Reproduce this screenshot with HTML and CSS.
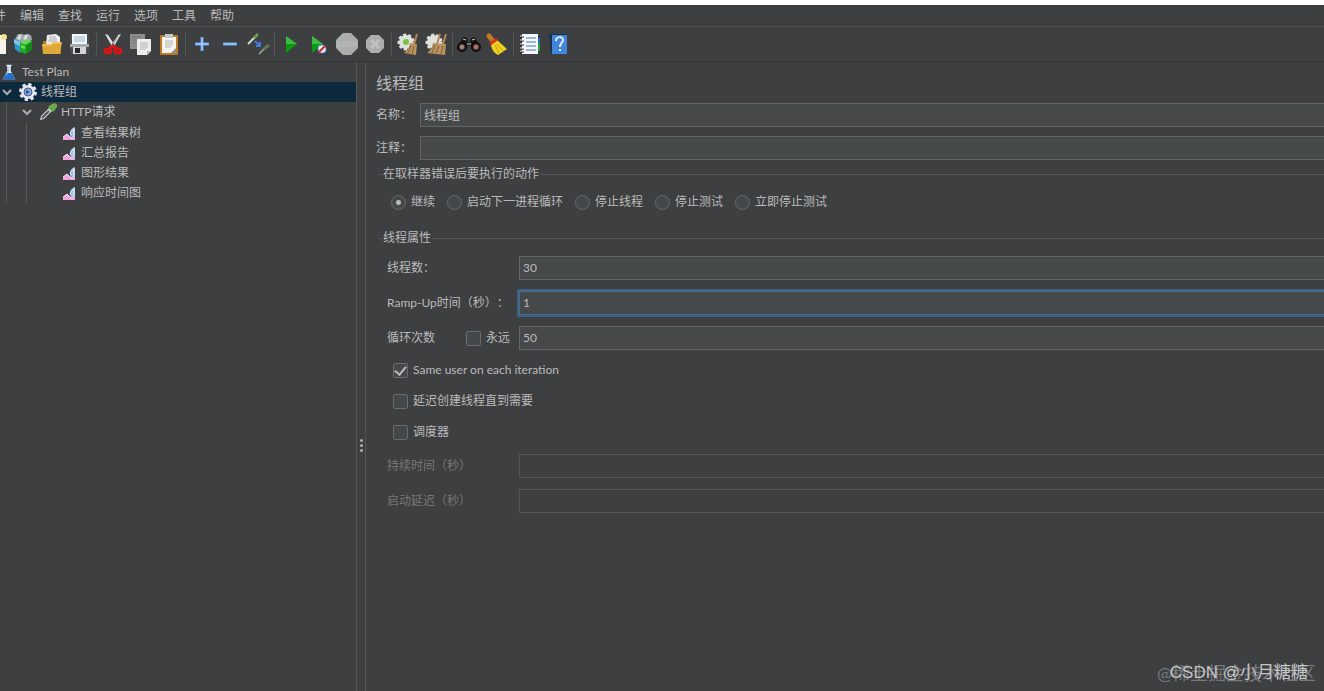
FILE: index.html
```html
<!DOCTYPE html>
<html lang="zh-CN">
<head>
    <meta charset="UTF-8">
    <meta name="viewport" content="width=device-width, initial-scale=1.0">
    <title>线程组</title>
    <link rel="stylesheet" href="styles.css">
</head>
<body>
    <nav class="menubar">
        <button>文件</button>
        <button>编辑</button>
        <button>查找</button>
        <button>运行</button>
        <button>选项</button>
        <button>工具</button>
        <button>帮助</button>
    </nav>

    <div class="toolbar">
        <button aria-label="新建">
            <svg viewBox="0 0 24 24"><path d="M4 3h15l3 3v16H4z" fill="#f4f4ec"/><circle cx="20" cy="5" r="3" fill="#f5e58a"/></svg>
        </button>
        <button aria-label="模板">
            <svg viewBox="0 0 24 24">
                <path d="M3 7l3-5 13 1 1 5-9 4z" fill="#9ba8aa"/><path d="M7 3l3-1-2 6-3-1zM13 3l4-1-3 6-3-1z" fill="#d5dddd"/>
                <path d="M2 7l6 3v11l-5-4z" fill="#2f9bd0"/><path d="M2 7l6 3v4l-6-3z" fill="#7cc8ea"/>
                <path d="M8 11l6 2v9l-6-2z" fill="#22a824"/><path d="M14 13l6-4v9l-6 4z" fill="#138a18"/><path d="M8 11l6-3 6 1-6 4z" fill="#5ade4a"/><path d="M9 13l4 1v3l-4-1z" fill="#62e05a"/>
            </svg>
        </button>
        <button aria-label="打开">
            <svg viewBox="0 0 24 24">
                <path d="M3 9h6l2 2h10v11H3z" fill="#b07a14"/><path d="M7 3l9-1 4 3v8H6z" fill="#f1f1f1"/><path d="M9 5h7M9 7h8M8 9h9" stroke="#aaa"/>
                <path d="M2 12h9l2-2h9l-2 12H3z" fill="#e0a838"/><path d="M3 13h8l2-2h8" stroke="#f8d682" fill="none"/>
            </svg>
        </button>
        <button aria-label="保存">
            <svg viewBox="0 0 24 24">
                <path d="M2 2h19v20H4l-2-2z" fill="#4b4f54"/><path d="M4 2h15v10H4z" fill="#f3f6f8"/><path d="M6 5h11M6 7h11M6 9h11" stroke="#9fb8cc"/>
                <path d="M2 12h19v3H2z" fill="#a7abad"/><path d="M5 15h13v7H5z" fill="#d4d6d8"/><path d="M7 16h5v5H7z" fill="#25282a"/>
            </svg>
        </button>
        <span class="sep"></span>
        <button aria-label="剪切">
            <svg viewBox="0 0 24 24">
                <path d="M4 2l3 1 8 12-3 1zM20 2l-3 1-8 12 3 1z" fill="#dfe3e4"/><path d="M17 4l-6 10" stroke="#8e9496"/>
                <ellipse cx="7" cy="19" rx="3" ry="2" stroke="#d81616" stroke-width="3" fill="none"/><ellipse cx="17" cy="19" rx="3" ry="2" stroke="#d81616" stroke-width="3" fill="none"/>
                <path d="M8 17l4-3 4 3" stroke="#d81616" stroke-width="3" fill="none"/>
            </svg>
        </button>
        <button aria-label="复制">
            <svg viewBox="0 0 24 24">
                <path d="M1 2h15v15H1z" fill="#8c8f90"/><path d="M3 5h10M3 8h5M3 11h5" stroke="#727576"/>
                <path d="M8 7h14v12l-4 4H8z" fill="#ececec"/><path d="M11 11h8M11 13h8M11 15h8M11 17h6" stroke="#b4b4b4"/><path d="M18 23v-4h4z" fill="#bdbdbd"/>
            </svg>
        </button>
        <button aria-label="粘贴">
            <svg viewBox="0 0 24 24">
                <rect x="3" y="3" width="18" height="20" rx="1" fill="#bd7a24"/><path d="M5 5h14v16H5z" fill="#f3f3f0"/><path d="M8 2h8v4H8z" fill="#c6c8c8"/>
                <path d="M8 9h8M8 11h8M8 13h8M8 15h6" stroke="#b4b4b4"/><path d="M14 21l5-5v5z" fill="#8d8d8d"/>
            </svg>
        </button>
        <span class="sep"></span>
        <button aria-label="展开">
            <svg viewBox="0 0 24 24"><path d="M12 5v14M5 12h14" stroke="#6ba6ef" stroke-width="3"/><path d="M12 6v12M6 12h12" stroke="#b5d6ff"/></svg>
        </button>
        <button aria-label="折叠">
            <svg viewBox="0 0 24 24"><path d="M5 12h14" stroke="#6ba6ef" stroke-width="3"/><path d="M6 12h12" stroke="#b5d6ff"/></svg>
        </button>
        <button aria-label="切换">
            <svg viewBox="0 0 24 24">
                <path d="M2 12l7-7" stroke="#d5dccd" stroke-width="2"/><path d="M8 6l4-4" stroke="#6a9a4b" stroke-width="3"/>
                <path d="M13 22l6-6" stroke="#8d907f" stroke-width="2"/><path d="M18 17l5-4" stroke="#66764f" stroke-width="3"/>
                <path d="M9 9l5 5M14 10v4h-4" stroke="#3f7de0" stroke-width="2" fill="none"/>
            </svg>
        </button>
        <span class="sep"></span>
        <button aria-label="启动">
            <svg viewBox="0 0 24 24"><path d="M7 4l11 8-11 9z" fill="#0a9a14"/><path d="M7 4l11 8H7z" fill="#3fb944"/></svg>
        </button>
        <button aria-label="不停顿开始">
            <svg viewBox="0 0 24 24">
                <path d="M5 4l11 8-11 9z" fill="#0a9a14"/><path d="M5 4l11 8H5z" fill="#3fb944"/>
                <circle cx="15" cy="17" r="4" fill="#e8eefc" stroke="#86a4dc"/><path d="M12 20l6-6" stroke="#d02222" stroke-width="2"/>
            </svg>
        </button>
        <button aria-label="停止">
            <svg viewBox="0 0 24 24">
                <path d="M8 1h8l7 7v8l-7 7H8l-7-7V8z" fill="#acaeae"/>
                <text x="12" y="15" text-anchor="middle" class="stop-text">STOP</text>
            </svg>
        </button>
        <button aria-label="关闭">
            <svg viewBox="0 0 24 24"><path d="M8 3h8l5 5v8l-5 5H8l-5-5V8z" fill="#acaeae"/><path d="M8 8l8 8M16 8l-8 8" stroke="#c0c2c2" stroke-width="3"/></svg>
        </button>
        <span class="sep"></span>
        <button aria-label="清除">
            <svg viewBox="0 0 24 24">
                <circle cx="10" cy="10" r="7" fill="#dfe1df"/><circle cx="10" cy="10" r="7" fill="none" stroke="#dfe1df" stroke-width="3" stroke-dasharray="3 2"/><circle cx="10" cy="10" r="3" fill="#76c442"/>
                <path d="M21 2l-3 10" stroke="#b98850" stroke-width="2"/><path d="M14 11l7 1-1 11-12-2c3-2 5-5 6-10z" fill="#b8935f"/><path d="M15 14l-3 7M18 14l-2 8" stroke="#80603a"/>
            </svg>
        </button>
        <button aria-label="清除全部">
            <svg viewBox="0 0 24 24">
                <circle cx="10" cy="10" r="7" fill="#dfe1df"/><circle cx="10" cy="10" r="7" fill="none" stroke="#dfe1df" stroke-width="3" stroke-dasharray="3 2"/>
                <path d="M16 2l-3 10M22 2l-3 10" stroke="#b98850" stroke-width="2"/><path d="M9 11l13 1-1 11-18-2c3-2 5-5 6-10z" fill="#b8935f"/><path d="M11 13l-3 8M15 14l-3 7M19 14l-2 8" stroke="#80603a"/>
            </svg>
        </button>
        <span class="sep"></span>
        <button aria-label="查找">
            <svg viewBox="0 0 24 24">
                <path d="M6 5l4 1 1 5-5 6-5-2zM18 5l-4 1-1 5 5 6 5-2z" fill="#161616"/><path d="M9 10h6v4H9z" fill="#222"/>
                <circle cx="5" cy="15" r="4" fill="#57504b" stroke="#0e0e0e" stroke-width="2"/><circle cx="19" cy="15" r="4" fill="#57504b" stroke="#0e0e0e" stroke-width="2"/>
                <circle cx="5" cy="15" r="2" fill="#b98778"/><circle cx="19" cy="15" r="2" fill="#c4725a"/><path d="M6 7l3 1M15 8l3-1M10 12h4" stroke="#c8c8c8"/>
            </svg>
        </button>
        <button aria-label="重置查找">
            <svg viewBox="0 0 24 24">
                <path d="M4 4l4 5" stroke="#c07a28" stroke-width="5" stroke-linecap="round"/><path d="M6 13l6-5 10 9-9 6c-4-2-6-5-7-10z" fill="#f2d21c"/>
                <path d="M5 12l7-5" stroke="#d0341c" stroke-width="3"/><path d="M10 13l4 8M12 12l6 7" stroke="#c09c10"/>
            </svg>
        </button>
        <span class="sep"></span>
        <button aria-label="函数助手">
            <svg viewBox="0 0 24 24">
                <path d="M18 10h4v9h-4z" fill="#2aa33a"/><path d="M18 6h4v5h-4z" fill="#2a63c8"/><path d="M4 2h16v20H4z" fill="#f6f8fb"/><path d="M8 6h10M8 10h10M8 14h10M8 18h10" stroke="#3c72bd"/>
                <path d="M2 5h4M2 9h4M2 13h4M2 17h4M2 20h4" stroke="#1b1b1b"/><path d="M2 4h3M2 8h3M2 12h3M2 16h3M2 19h3" stroke="#e8e8e8"/>
            </svg>
        </button>
        <button aria-label="帮助">
            <svg viewBox="0 0 24 24">
                <path d="M3 2h18L8 22H5z" fill="#16324f"/><path d="M6 3h15v19H6z" fill="#3f86dc"/>
                <path d="M10 9c0-5 7-5 7-1 0 3-3 3-3 7M14 17v2" stroke="#dcebff" stroke-width="2" fill="none"/>
            </svg>
        </button>
    </div>

    <div class="workspace">
        <aside class="tree">
            <div class="row root">
                <span class="icon"><svg viewBox="0 0 20 20"><path d="M7 2h6v1l-1 1v5l5 9H3l5-9V4L7 3z" fill="#dde8f0"/><path d="M7 11h6l4 7H3z" fill="#2172cf"/><path d="M9 4v6l-2 4" stroke="#9eb4c4" fill="none"/></svg></span>
                <span>Test Plan</span>
            </div>
            <ul>
                <li>
                    <div class="row selected">
                        <span class="chevron"><svg viewBox="0 0 14 14"><path d="M3 5l4 4 4-4"/></svg></span>
                        <span class="icon"><svg viewBox="0 0 20 20"><circle cx="10" cy="10" r="7" fill="none" stroke="#e3e7ec" stroke-width="4" stroke-dasharray="3 2.500"/><circle cx="10" cy="10" r="7" fill="#e3e7ec"/><circle cx="10" cy="10" r="4" fill="#8fa8d4" stroke="#3e5f9c"/><path d="M8 8l4 2-4 2z" fill="#2c4c88"/></svg></span>
                        <span>线程组</span>
                    </div>
                    <ul>
                        <li>
                            <div class="row">
                                <span class="chevron"><svg viewBox="0 0 14 14"><path d="M3 5l4 4 4-4"/></svg></span>
                                <span class="icon"><svg viewBox="0 0 20 20"><path d="M2 18l1-4 8-8 3 3-8 8z" fill="#cfd4d0"/><path d="M4 16l7-7" stroke="#4e5350" stroke-width="2"/><path d="M10 5l4-3c3-2 6 0 5 3l-3 4-2 1z" fill="#6aa84b"/></svg></span>
                                <span>HTTP请求</span>
                            </div>
                            <ul>
                                <li class="row leaf">
                                    <span class="icon"><svg viewBox="0 0 20 20"><path d="M5 17v-3l4-3 4 3 4 1v2z" fill="#f0a4e0"/><path d="M5 14l4-3 4 4h4" stroke="#fbe4f6" fill="none"/><path d="M17 4v10c-4 1-6-2-5-5 1-3 3-4 5-5z" fill="#c3dcf3"/><path d="M14 8v5" stroke="#7fa8d6"/></svg></span>
                                    <span>查看结果树</span>
                                </li>
                                <li class="row leaf">
                                    <span class="icon"><svg viewBox="0 0 20 20"><path d="M5 17v-3l4-3 4 3 4 1v2z" fill="#f0a4e0"/><path d="M5 14l4-3 4 4h4" stroke="#fbe4f6" fill="none"/><path d="M17 4v10c-4 1-6-2-5-5 1-3 3-4 5-5z" fill="#c3dcf3"/><path d="M14 8v5" stroke="#7fa8d6"/></svg></span>
                                    <span>汇总报告</span>
                                </li>
                                <li class="row leaf">
                                    <span class="icon"><svg viewBox="0 0 20 20"><path d="M5 17v-3l4-3 4 3 4 1v2z" fill="#f0a4e0"/><path d="M5 14l4-3 4 4h4" stroke="#fbe4f6" fill="none"/><path d="M17 4v10c-4 1-6-2-5-5 1-3 3-4 5-5z" fill="#c3dcf3"/><path d="M14 8v5" stroke="#7fa8d6"/></svg></span>
                                    <span>图形结果</span>
                                </li>
                                <li class="row leaf">
                                    <span class="icon"><svg viewBox="0 0 20 20"><path d="M5 17v-3l4-3 4 3 4 1v2z" fill="#f0a4e0"/><path d="M5 14l4-3 4 4h4" stroke="#fbe4f6" fill="none"/><path d="M17 4v10c-4 1-6-2-5-5 1-3 3-4 5-5z" fill="#c3dcf3"/><path d="M14 8v5" stroke="#7fa8d6"/></svg></span>
                                    <span>响应时间图</span>
                                </li>
                            </ul>
                        </li>
                    </ul>
                </li>
            </ul>
        </aside>

        <div class="splitter"><i></i><i></i><i></i></div>

        <main class="panel">
            <h1>线程组</h1>
            <div class="lines">
                <div class="line">
                    <label for="name">名称：</label>
                    <input type="text" id="name" value="线程组">
                </div>
                <div class="line">
                    <label for="comments">注释：</label>
                    <input type="text" id="comments">
                </div>
            </div>

            <fieldset>
                <legend>在取样器错误后要执行的动作</legend>
                <div class="radios">
                    <label><input type="radio" name="action" checked>继续</label>
                    <label><input type="radio" name="action">启动下一进程循环</label>
                    <label><input type="radio" name="action">停止线程</label>
                    <label><input type="radio" name="action">停止测试</label>
                    <label><input type="radio" name="action">立即停止测试</label>
                </div>
            </fieldset>

            <fieldset>
                <legend>线程属性</legend>
                <div class="props">
                    <div class="prop">
                        <label for="threads">线程数：</label>
                        <input type="text" id="threads" value="30">
                    </div>
                    <div class="prop">
                        <label for="rampup">Ramp-Up时间（秒）：</label>
                        <input type="text" id="rampup" class="focused" value="1">
                    </div>
                    <div class="prop">
                        <div class="loops">
                            <label for="loops">循环次数</label>
                            <label class="check"><input type="checkbox">永远</label>
                        </div>
                        <input type="text" id="loops" value="50">
                    </div>
                    <div class="checks">
                        <label class="check"><input type="checkbox" checked>Same user on each iteration</label>
                        <label class="check"><input type="checkbox">延迟创建线程直到需要</label>
                        <label class="check"><input type="checkbox">调度器</label>
                    </div>
                    <div class="prop disabled">
                        <label for="duration">持续时间（秒）</label>
                        <input type="text" id="duration" disabled>
                    </div>
                    <div class="prop disabled">
                        <label for="delay">启动延迟（秒）</label>
                        <input type="text" id="delay" disabled>
                    </div>
                </div>
            </fieldset>
        </main>
    </div>

    <div class="watermark community">@稀土掘金技术社区</div>
    <div class="watermark author">CSDN @小月糖糖</div>
</body>
</html>
```
FILE: styles.css
```css
* {
    box-sizing: border-box;
}
body {
    margin: 0;
    height: 100vh;
    display: flex;
    flex-direction: column;
    border-top: 5px solid #fff;
    background: #3d3f41;
    color: #bbb;
    font: 12px/16px Lato, "Noto Sans CJK SC", sans-serif;
    text-spacing-trim: space-all;
    overflow: hidden;
}
button, input {
    font: inherit;
    color: inherit;
}
button {
    border: none;
    background: none;
    padding: 0;
}
ul {
    list-style: none;
    margin: 0;
    padding: 0;
}

/* Menu and toolbar run past the left edge of the window */
.menubar {
    display: flex;
    height: 22px;
    margin-left: -25px;
    border-bottom: 1px solid #515151;
}
.menubar button {
    padding: 0 7px;
    white-space: nowrap;
}
.toolbar {
    display: flex;
    align-items: center;
    height: 35px;
    margin-left: -18px;
    border-bottom: 1px solid #323537;
}
.toolbar button {
    width: 28px;
    height: 28px;
    display: flex;
    align-items: center;
    justify-content: center;
}
.toolbar svg {
    width: 24px;
    height: 24px;
}
.sep {
    width: 1px;
    height: 24px;
    margin: 0 2px;
    background: #555;
}
.stop-text {
    font: bold 8px "Liberation Sans", sans-serif;
    fill: #bbbdbd;
}

.workspace {
    flex: 1;
    display: flex;
    min-height: 0;
}

/* Tree */
.tree {
    width: 357px;
    flex-shrink: 0;
    border-right: 1px solid #555;
}
.row {
    display: flex;
    align-items: center;
    height: 20px;
}
.row .icon {
    width: 20px;
    height: 20px;
    margin-right: 3px;
}
.row svg {
    display: block;
}
.root .icon {
    width: 18px;
    height: 18px;
    margin-right: 4px;
}
.selected {
    background: #0d293e;
}
.chevron {
    width: 14px;
    height: 14px;
    margin-right: 4px;
}
.chevron path {
    fill: none;
    stroke: #adadad;
    stroke-width: 2;
}
.tree ul ul {
    margin-left: 6px;
    padding-left: 13px;
    border-left: 1px solid #55585a;
}
.tree ul ul ul {
    padding-top: 1px;
}
.leaf {
    padding-left: 18px;
}

.splitter {
    width: 8px;
    display: flex;
    flex-direction: column;
    align-items: center;
    justify-content: center;
    gap: 2px;
    padding-top: 138px;
}
.splitter i {
    width: 3px;
    height: 3px;
    border-radius: 50%;
    background: #b0b0b0;
}

/* Thread group form */
.panel {
    flex: 1;
    min-width: 0;
    padding: 9px 0 0 10px;
    border-left: 1px solid #555;
    overflow: hidden;
}
h1 {
    margin: 0 0 8px;
    font-size: 16px;
    font-weight: normal;
    line-height: 24px;
}
input[type="text"] {
    flex: 1;
    min-width: 0;
    height: 24px;
    margin: 0 -2px 0 0;
    padding: 0 3px 1px;
    border: 1px solid #646464;
    background: #45494a;
    outline: none;
}
input[type="text"].focused {
    border-color: #466d94;
    box-shadow: 0 0 0 2px #3d6185;
}
input[type="text"]:disabled {
    border-color: #555;
    background: #3d3f41;
}
.lines {
    display: flex;
    flex-direction: column;
    gap: 9px;
    margin-bottom: 4px;
}
.line {
    display: flex;
    align-items: center;
}
.line label {
    width: 44px;
}
fieldset {
    margin: 0 0 0 2px;
    padding: 0;
    border: none;
    border-top: 1px solid #555;
    min-width: 0;
}
legend {
    margin-left: 4px;
    padding: 0 1px;
    line-height: 20px;
}
.radios {
    display: flex;
    gap: 12px;
    padding: 10px 13px 18px;
}
.radios label, .check {
    display: flex;
    align-items: center;
    gap: 5px;
    white-space: nowrap;
}
input[type="radio"], input[type="checkbox"] {
    appearance: none;
    flex-shrink: 0;
    width: 15px;
    height: 15px;
    margin: 0;
    border: 1px solid #6b6b6b;
    background: #43494a;
}
input[type="radio"] {
    border-radius: 50%;
}
input[type="radio"]:checked {
    background: radial-gradient(circle, #bbb 2px, #43494a 3px);
}
input[type="checkbox"] {
    border-radius: 2px;
    display: grid;
    place-items: center;
}
input[type="checkbox"]:checked::after {
    content: "";
    width: 5px;
    height: 9px;
    margin-bottom: 2px;
    border: solid #bbb;
    border-width: 0 2px 2px 0;
    transform: rotate(40deg);
}
.props {
    display: flex;
    flex-direction: column;
    gap: 11px;
    padding: 8px 0 0 9px;
}
.prop {
    display: grid;
    grid-template-columns: 132px 1fr;
    align-items: center;
}
.loops {
    display: flex;
    justify-content: space-between;
    padding-right: 9px;
}
.checks {
    display: flex;
    flex-direction: column;
    align-items: flex-start;
    gap: 15px;
    padding: 1px 6px 3px;
}
.disabled {
    color: #777;
}

/* Two stamps, one printed over the other */
.watermark {
    position: absolute;
    bottom: 6px;
    white-space: nowrap;
    line-height: 24px;
}
.community {
    right: 8px;
    color: #77797a;
    font-size: 18px;
}
.author {
    right: 16px;
    color: #c4c5c6;
    font-family: "Liberation Sans", "Noto Sans CJK SC", sans-serif;
    font-size: 17px;
}
```
